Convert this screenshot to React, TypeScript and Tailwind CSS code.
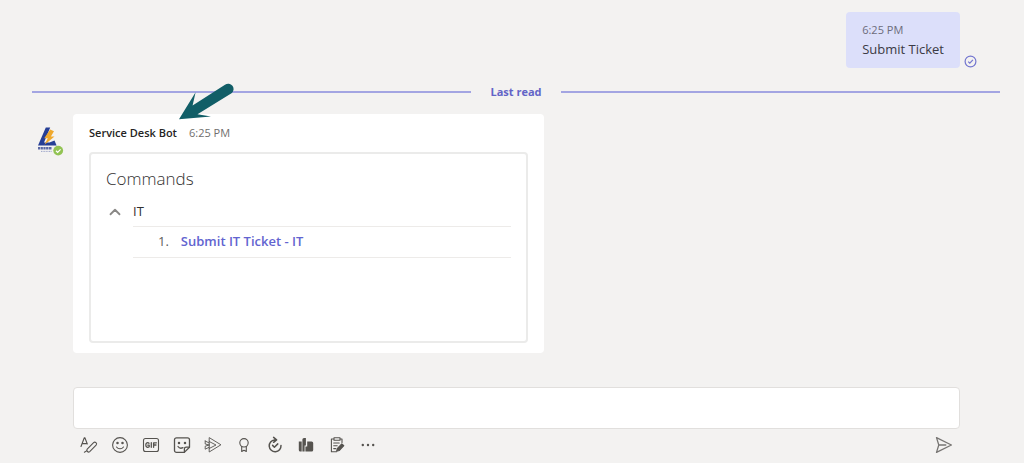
import React from "react";
import { ChevronUp } from "lucide-react";

const iconProps = {
  width: 18,
  height: 18,
  viewBox: "0 0 18 18",
  fill: "none",
  stroke: "currentColor",
  strokeWidth: 1.1,
  strokeLinecap: "round" as const,
  strokeLinejoin: "round" as const,
  "aria-hidden": true,
};

const tools = [
  {
    label: "Format",
    icon: (
      <svg {...iconProps}>
        <path d="M1 10.5 4.3 1.8h.6L7.3 8M2.2 7.6h4.4" />
        <path d="m7.2 13.2 6.4-6.6c1.6-1.4 3.9.9 2.5 2.5l-6.4 6.5c-1.5 1.3-3.8-.8-2.5-2.4zM7 14.6l-2.6 1.6" />
      </svg>
    ),
  },
  {
    label: "Emoji",
    icon: (
      <svg {...iconProps}>
        <circle cx="9" cy="9" r="7.4" />
        <path d="M5.5 11c1.8 2.4 5.2 2.4 7 0" />
        <circle cx="6.5" cy="7" r="0.7" fill="currentColor" />
        <circle cx="11.5" cy="7" r="0.7" fill="currentColor" />
      </svg>
    ),
  },
  {
    label: "Giphy",
    icon: (
      <svg {...iconProps}>
        <rect x="1.5" y="2.5" width="15" height="13" rx="2" />
        <path d="M7 7.2C5.8 6 3.8 6.8 3.8 9s2 3 3.4 1.8V9.2H5.8M9.3 6.7v4.6M11.6 11.3V6.8h2.8M11.6 9h2.4" strokeWidth="1.3" />
      </svg>
    ),
  },
  {
    label: "Sticker",
    icon: (
      <svg {...iconProps} strokeWidth={1.3}>
        <path d="M3.5 1.8h11a2 2 0 0 1 2 2v7.4l-5.2 5.2H3.5a2 2 0 0 1-2-2V3.8a2 2 0 0 1 2-2z" />
        <path d="M16.4 11.2h-3.2a1.8 1.8 0 0 0-1.8 1.8v3.2M5 10.5c1.1 1.7 3.2 2.1 5 1.2" />
        <circle cx="6" cy="7" r="0.6" fill="currentColor" />
        <circle cx="12" cy="7" r="0.6" fill="currentColor" />
      </svg>
    ),
  },
  {
    label: "Stream",
    icon: (
      <svg {...iconProps} strokeWidth={0.9}>
        <path d="M5.2 2v14L16.6 9zM5.2 5.5 12 9l-6.8 3.5M1.2 5l4 2M1.2 5v3l4 1M5.2 9l-4 1.2v3l4-2" />
      </svg>
    ),
  },
  {
    label: "Praise",
    icon: (
      <svg {...iconProps}>
        <circle cx="9" cy="6.8" r="4.2" />
        <path d="M6.7 10.5v5l2.3-1.3 2.3 1.3v-5" />
      </svg>
    ),
  },
  {
    label: "Updates",
    icon: (
      <svg {...iconProps} strokeWidth={1.5}>
        <path d="M8.6 3.9A5.9 5.9 0 1 0 15 9.4M7.6 1.4l3 2.5-3 2.4M6.6 9.4l1.8 1.8 3.4-3.3" />
      </svg>
    ),
  },
  {
    label: "Service desk",
    icon: (
      <svg {...iconProps} fill="currentColor" stroke="none">
        <path d="M1.8 5.5h2.9v10.1H3.4A1.6 1.6 0 0 1 1.8 14zM5.4 3.6A1.6 1.6 0 0 1 7 2h1.9v7.5H7.6v6.1H5.4zM10.2 5.5h4.4a1.6 1.6 0 0 1 1.6 1.6V14a1.6 1.6 0 0 1-1.6 1.6H8.4v-5.2h1.8z" />
      </svg>
    ),
  },
  {
    label: "Approvals",
    icon: (
      <svg {...iconProps}>
        <path d="M6 3H3.4v12.8h5M12 3h2v3.4M6 1.8h6v2.4H6zM5.7 7h5.5M5.7 9.8h3.5M5.7 12.6h2" />
        <path d="m9.2 12.6 4.6-4.7 2 1.8-4.6 4.8-2.6.8z" fill="currentColor" />
      </svg>
    ),
  },
  {
    label: "More options",
    icon: (
      <svg {...iconProps} fill="currentColor" stroke="none">
        <circle cx="3.8" cy="9" r="1.2" />
        <circle cx="9" cy="9" r="1.2" />
        <circle cx="14.2" cy="9" r="1.2" />
      </svg>
    ),
  },
];

const commands = ["Submit IT Ticket - IT"];

const BotAvatar = () => (
  <svg width="28" height="30" viewBox="0 0 28 30" role="img" aria-label="Service Desk Bot">
    <path d="M9.8 1.5h4.4L8 16.5h5.5l5-2 2.1 5H2z" fill="#263f96" />
    <path d="m14.2 3.5-6 8.8h3.6L8.5 18.8l10-8.3h-3.6L18 5.2z" fill="#f0a92d" />
    <path d="M2 22.2h14" stroke="#5c69a5" strokeWidth="2.6" strokeDasharray="2.2 .5" />
    <path d="M5 25.4h11" stroke="#9ca4c9" strokeWidth="1" strokeDasharray="1 .6" />
    <circle cx="22.2" cy="24.6" r="4.9" fill="#92c353" />
    <path d="m20 24.8 1.6 1.5 3-3" fill="none" stroke="#fff" strokeWidth="1.2" />
  </svg>
);

const Pointer = () => (
  <svg
    className="pointer-events-none absolute -top-8 left-[104px]"
    width="60"
    height="42"
    viewBox="0 0 60 42"
    aria-hidden="true"
  >
    <path d="M2 37.3 18.6 10.3 15.6 23.4 48 2.8A5.1 5.1 0 0 1 54.5 11.2L20.5 32.2l13.5 2.2z" fill="#115e67" />
  </svg>
);

const App = () => {
  return (
    <main className="min-h-screen bg-[#f3f2f1] pt-3 font-['Open_Sans','Noto_Sans',sans-serif] text-[11px] text-[#323130]">
      <div className="mr-[47px] flex items-end justify-end gap-1">
        <div className="rounded bg-[#dcdffa] px-4 pt-2 pb-2.5">
          <div className="leading-5 text-[#6c6c7b]">6:25 PM</div>
          <div className="text-[13px] leading-[18px] text-[#3b3a44]">Submit Ticket</div>
        </div>
        <svg width="13" height="13" viewBox="0 0 13 13" fill="none" stroke="#7376cf" role="img" aria-label="Sent">
          <circle cx="6.5" cy="6.5" r="5.4" strokeWidth="1.2" />
          <path d="m4.2 6.6 1.6 1.6 3.1-3.4" strokeWidth="1.2" />
        </svg>
      </div>

      <div className="mr-6 ml-8 mt-3.5 flex items-center gap-[19px]">
        <span className="h-0.5 flex-1 bg-[#a3a5e2]" />
        <span className="font-bold leading-5 text-[#6264c7]">Last read</span>
        <span className="h-0.5 flex-1 bg-[#a3a5e2]" />
      </div>

      <article className="mt-3 ml-9 flex items-start">
        <div className="mt-3 w-[37px] shrink-0">
          <BotAvatar />
        </div>
        <div className="relative w-[471px] rounded bg-white px-4 py-2.5">
          <Pointer />
          <header className="flex gap-3 leading-[18px]">
            <span className="font-semibold text-[#252423]">Service Desk Bot</span>
            <time className="text-[#6f6e6d]">6:25 PM</time>
          </header>
          <section className="mt-2.5 min-h-[191px] rounded-sm border-2 border-[#ebebea] px-[15px] pt-[11px]">
            <h2 className="text-[17px] font-light leading-7">Commands</h2>
            <button type="button" className="mt-[5px] flex h-7 items-center gap-[9px] text-[13px]" aria-expanded="true">
              <ChevronUp size={18} strokeWidth={2.4} className="text-[#8a8886]" />
              IT
            </button>
            <ol className="ml-[27px] border-t border-[#edebe9] text-[13px]">
              {commands.map((command, index) => (
                <li key={command} className="flex h-[31px] items-center gap-3 border-b border-[#edebe9] pl-[25px]">
                  <span className="text-[#605e5c]">{index + 1}.</span>
                  <a href="#submit-it-ticket" className="font-semibold text-[#6264d0]">
                    {command}
                  </a>
                </li>
              ))}
            </ol>
          </section>
        </div>
      </article>

      <form className="mt-[34px] mr-16 ml-[73px]">
        <input
          type="text"
          aria-label="Type a new message"
          className="block h-[42px] w-full rounded border border-[#e1dfdd] bg-white px-4 outline-none"
        />
        <div className="mt-1 flex h-6 items-center text-[#55534f]">
          {tools.map((tool) => (
            <button key={tool.label} type="button" aria-label={tool.label} className="flex w-[31px] justify-center">
              {tool.icon}
            </button>
          ))}
          <button type="submit" aria-label="Send" className="ml-auto flex w-8 justify-center text-[#777573]">
            <svg {...iconProps} strokeWidth={1.3}>
              <path d="M1.5 1.6 16.4 9 1.5 16.4 3.8 9zM3.8 9h7" />
            </svg>
          </button>
        </div>
      </form>
    </main>
  );
};

export default App;
